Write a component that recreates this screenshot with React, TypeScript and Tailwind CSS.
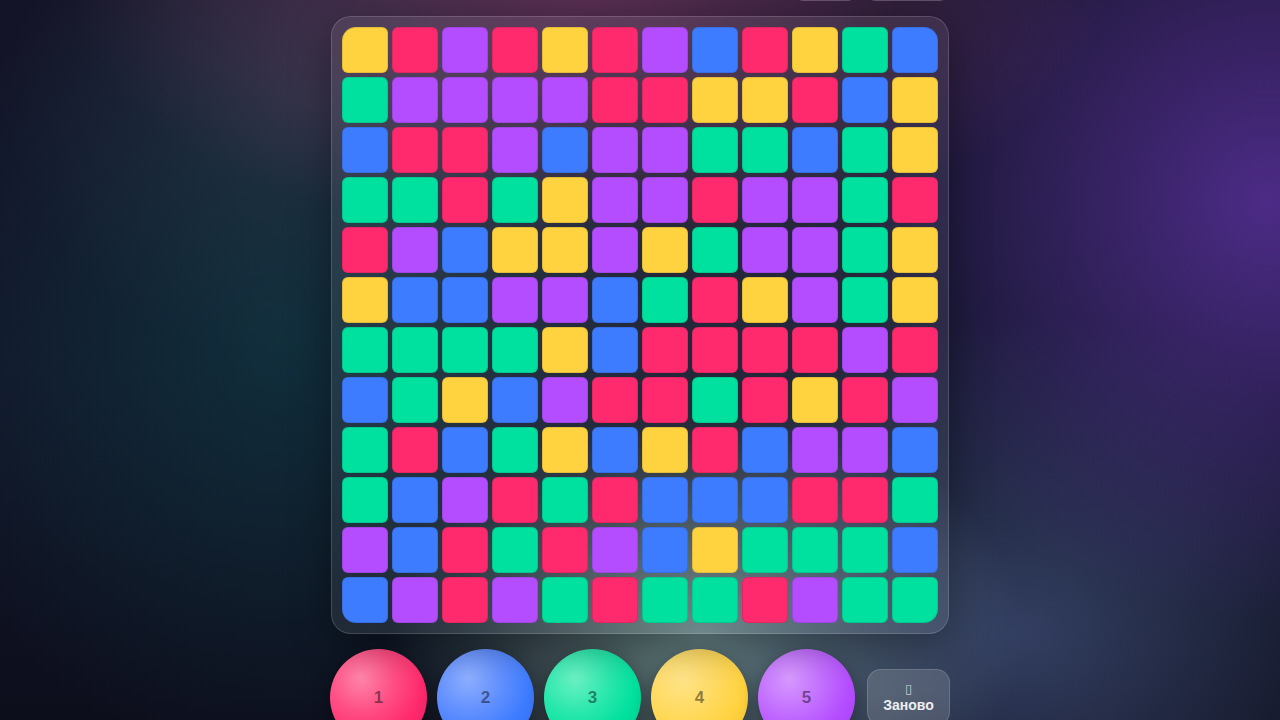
import React from "react";

const GRID = [
  "YRPRYRPBRYGB",
  "GPPPPRRYYRBY",
  "BRRPBPPGGBGY",
  "GGRGYPPRPPGR",
  "RPBYYPYGPPGY",
  "YBBPPBGRYPGY",
  "GGGGYBRRRRPR",
  "BGYBPRRGRYRP",
  "GRBGYBYRBPPB",
  "GBPRGRBBBRRG",
  "PBRGRPBYGGGB",
  "BPRPGRGGRPGG",
];

const CELL: Record<string, string> = {
  Y: "bg-[#ffd23f]",
  R: "bg-[#ff2a6d]",
  P: "bg-[#b44cff]",
  B: "bg-[#3d7cff]",
  G: "bg-[#00e09e]",
};

function cornerClass(r: number, c: number) {
  if (r === 0 && c === 0) return "rounded-tl-[14px]";
  if (r === 0 && c === 11) return "rounded-tr-[14px]";
  if (r === 11 && c === 0) return "rounded-bl-[14px]";
  if (r === 11 && c === 11) return "rounded-br-[14px]";
  return "";
}

const BALLS = [
  { n: "1", cls: "bg-[radial-gradient(circle_at_32%_30%,#ff86ab_0%,#ff4f84_35%,#ff2a6d_65%,#e81e60_100%)]" },
  { n: "2", cls: "bg-[radial-gradient(circle_at_32%_30%,#8fb0ff_0%,#6390ff_35%,#3d7cff_65%,#3169ea_100%)]" },
  { n: "3", cls: "bg-[radial-gradient(circle_at_32%_30%,#6cf2c4_0%,#2de8ad_35%,#00e09e_65%,#00c98c_100%)]" },
  { n: "4", cls: "bg-[radial-gradient(circle_at_32%_30%,#ffe58a_0%,#ffdb63_35%,#ffd23f_65%,#f0bf2a_100%)]" },
  { n: "5", cls: "bg-[radial-gradient(circle_at_32%_30%,#d89bff_0%,#c370ff_35%,#b44cff_65%,#a03ef0_100%)]" },
];

export default function App() {
  return (
    <div className="h-screen w-full overflow-hidden font-['Liberation_Sans',Arial,sans-serif] bg-[radial-gradient(520px_260px_at_46%_-2%,rgba(150,70,120,0.55),transparent),radial-gradient(420px_420px_at_99%_28%,rgba(95,50,165,0.75),transparent),radial-gradient(380px_320px_at_80%_88%,rgba(80,100,150,0.55),transparent),radial-gradient(380px_420px_at_22%_48%,rgba(15,75,80,0.45),transparent),radial-gradient(320px_220px_at_55%_88%,rgba(140,180,170,0.7),transparent),radial-gradient(300px_260px_at_24%_14%,rgba(60,65,85,0.45),transparent),linear-gradient(180deg,#141428_0%,#12162a_50%,#0d0e1c_100%)]">
      <div className="flex flex-col items-center">
        <div className="-mt-[39px] mb-[15px] flex h-[40px] w-[618px] items-center justify-end gap-[9px]">
          <div className="h-[40px] w-[63px] rounded-[10px] border border-white/15 bg-white/10" />
          <div className="h-[40px] w-[83px] rounded-[10px] border border-white/15 bg-white/10" />
        </div>

        <div className="rounded-[20px] border border-white/15 bg-white/[0.08] p-[10px] shadow-[0_10px_40px_rgba(0,0,0,0.35)] backdrop-blur-md">
          <div className="grid grid-cols-[repeat(12,46px)] gap-[4px]">
            {GRID.flatMap((row, r) =>
              row.split("").map((ch, c) => (
                <div
                  key={`${r}-${c}`}
                  className={`h-[46px] w-[46px] rounded-[6px] border border-black/10 ${CELL[ch]} ${cornerClass(r, c)}`}
                />
              ))
            )}
          </div>
        </div>

        <div className="mt-[15px] flex w-[620px] items-center gap-[10px]">
          {BALLS.map((b) => (
            <div
              key={b.n}
              className={`flex h-[97px] w-[97px] items-center justify-center rounded-full ${b.cls} shadow-[0_6px_18px_rgba(0,0,0,0.35)]`}
            >
              <span className="text-[17px] font-bold text-black/45">{b.n}</span>
            </div>
          ))}
          <div className="ml-[2px] flex h-[57px] w-[83px] flex-col items-center justify-center rounded-[14px] border border-white/15 bg-white/15 text-white/90">
            <span className="font-['DejaVu_Sans',sans-serif] text-[13px] leading-[16px] text-white/70">▯</span>
            <span className="text-[14px] font-bold leading-[17px]">Заново</span>
          </div>
        </div>
      </div>
    </div>
  );
}
